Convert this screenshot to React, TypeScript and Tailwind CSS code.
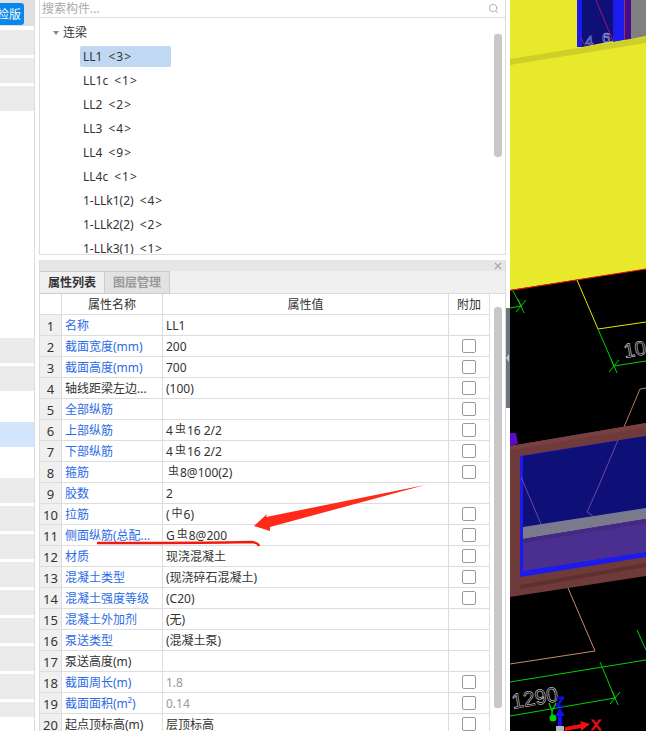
import { Search } from "lucide-react";

const font = { fontFamily: '"Noto Sans", "Noto Sans CJK SC", sans-serif' };

const sideRows = [
  { h: "h-[25px]", bg: "bg-[#ebebeb]", mt: "mt-[4px]" },
  { h: "h-[25px]", bg: "bg-[#ebebeb]", mt: "mt-[3px]" },
  { h: "h-[25px]", bg: "bg-[#ebebeb]", mt: "mt-[3px]" },
  { h: "h-[25px]", bg: "bg-[#ebebeb]", mt: "mt-[227px]" },
  { h: "h-[25px]", bg: "bg-[#ebebeb]", mt: "mt-[3px]" },
  { h: "h-[25px]", bg: "bg-[#d3e5fb]", mt: "mt-[31px]" },
  { h: "h-[25px]", bg: "bg-[#ebebeb]", mt: "mt-[31px]" },
  { h: "h-[25px]", bg: "bg-[#ebebeb]", mt: "mt-[3px]" },
  { h: "h-[25px]", bg: "bg-[#ebebeb]", mt: "mt-[3px]" },
  { h: "h-[25px]", bg: "bg-[#ebebeb]", mt: "mt-[3px]" },
  { h: "h-[25px]", bg: "bg-[#ebebeb]", mt: "mt-[3px]" },
  { h: "h-[25px]", bg: "bg-[#ebebeb]", mt: "mt-[3px]" },
  { h: "h-[25px]", bg: "bg-[#ebebeb]", mt: "mt-[3px]" },
  { h: "h-[25px]", bg: "bg-[#ebebeb]", mt: "mt-[3px]" },
  { h: "h-[15px]", bg: "bg-[#ebebeb]", mt: "mt-[3px]" },
];

const members = [
  { name: "LL1", count: "<3>" },
  { name: "LL1c", count: "<1>" },
  { name: "LL2", count: "<2>" },
  { name: "LL3", count: "<4>" },
  { name: "LL4", count: "<9>" },
  { name: "LL4c", count: "<1>" },
  { name: "1-LLk1(2)", count: "<4>" },
  { name: "1-LLk2(2)", count: "<2>" },
  { name: "1-LLk3(1)", count: "<1>" },
];

function Bar({ glyph = "虫" }: { glyph?: string }) {
  return <span className="relative top-[-2px] ml-[2px] mr-[1px] text-[11px] leading-none">{glyph}</span>;
}

type Row = {
  name: string;
  value?: React.ReactNode;
  blue?: boolean;
  check?: boolean;
  muted?: boolean;
};

const rows: Row[] = [
  { name: "名称", value: "LL1", blue: true },
  { name: "截面宽度(mm)", value: "200", blue: true, check: true },
  { name: "截面高度(mm)", value: "700", blue: true, check: true },
  { name: "轴线距梁左边...", value: "(100)", check: true },
  { name: "全部纵筋", blue: true, check: true },
  { name: "上部纵筋", value: <>4<Bar />16 2/2</>, blue: true, check: true },
  { name: "下部纵筋", value: <>4<Bar />16 2/2</>, blue: true, check: true },
  { name: "箍筋", value: <><Bar />8@100(2)</>, blue: true, check: true },
  { name: "胶数", value: "2", blue: true },
  { name: "拉筋", value: <>(<Bar glyph="中" />6)</>, blue: true, check: true },
  { name: "侧面纵筋(总配...", value: <>G<Bar />8@200</>, blue: true, check: true },
  { name: "材质", value: "现浇混凝土", blue: true, check: true },
  { name: "混凝土类型", value: "(现浇碎石混凝土)", blue: true, check: true },
  { name: "混凝土强度等级", value: "(C20)", blue: true, check: true },
  { name: "混凝土外加剂", value: "(无)", blue: true },
  { name: "泵送类型", value: "(混凝土泵)", blue: true },
  { name: "泵送高度(m)" },
  { name: "截面周长(m)", value: "1.8", blue: true, check: true, muted: true },
  { name: "截面面积(m²)", value: "0.14", blue: true, check: true, muted: true },
  { name: "起点顶标高(m)", value: "层顶标高", check: true },
];

function Tick({ x, y }: { x: number; y: number }) {
  return <path d={`M${x - 5} ${y + 6}L${x + 5} ${y - 6}M${x - 3} ${y - 7}L${x + 3} ${y + 7}`} stroke="#00d000" strokeWidth="1" fill="none" />;
}

// 3D model view on the right, coordinates are offset from x=510
function ModelView() {
  return (
    <svg width="136" height="731" viewBox="510 0 136 731" className="block" style={{ fontFamily: '"Liberation Sans", sans-serif' }}>
      <rect x="510" y="0" width="136" height="731" fill="#000" />
      <polygon points="510,0 646,0 646,269 510,290" fill="#e9e92b" />
      <polygon points="577,0 582,0 582,47 577,47" fill="#1b1bee" />
      <polygon points="582,0 613,0 613,41 582,47" fill="#0f0f78" />
      <polygon points="613,0 624,0 624,40 613,42" fill="#1b1bee" />
      <polygon points="624,0 631,0 631,39 624,40" fill="#4a0a90" />
      <rect x="624" y="0" width="1" height="40" fill="#8a4040" />
      <polygon points="631,0 646,0 646,36 631,39" fill="#808080" />
      <path d="M596 0L613 41M581 38L585 46" stroke="#a01870" strokeWidth="1" fill="none" />
      <text x="585" y="46" fontSize="15" fill="none" stroke="#a9a9e8" strokeWidth="0.5">4</text>
      <text x="602" y="43" fontSize="15" fill="none" stroke="#c4c4f0" strokeWidth="0.5">6</text>
      <polygon points="510,59 646,37 646,43 510,65" fill="#cfcf2a" />
      <line x1="510" y1="290.5" x2="646" y2="269" stroke="#f01010" strokeWidth="1.2" />

      <path d="M577 280L598 329L646 322" stroke="#e6e600" strokeWidth="1" fill="none" />
      <path d="M598 329L614 366L646 361" stroke="#00d000" strokeWidth="1" fill="none" />
      <path d="M513 291L521 306L510 308" stroke="#00d000" strokeWidth="1" fill="none" />
      <Tick x={521} y={306} />
      <Tick x={614} y={366} />
      <text x="625" y="358" fontSize="20" transform="rotate(-10 625 358)" fill="none" stroke="#f0f0f0" strokeWidth="0.5">10</text>

      <polygon points="510,433 516,433 518,444 510,446" fill="#5a0ac8" />
      <path d="M624 427L640 389L646 388" stroke="#b87860" strokeWidth="1" fill="none" />
      <polygon points="510,446 646,423 646,576 510,597" fill="#6f3a3a" />
      <polygon points="510,446 646,423 646,427 510,450" fill="#7a4040" />
      <polygon points="520,585 646,563 646,567 520,589" fill="#5f3030" />
      <polygon points="520,456 646,436 646,557 520,577" fill="#1b1bee" />
      <polygon points="523,456 646,436 646,508 523,527" fill="#0f0f78" />
      <polygon points="523,527 646,508 646,519 523,539" fill="#7a7a8c" />
      <polygon points="523,539 646,519 646,552 523,571" fill="#4a2e90" />
      <polygon points="523,539 646,519 646,523 523,543" fill="#432a80" />
      <path d="M618 440L597 490L587 512L593 516M521 477L541 524" stroke="#6a4aa0" strokeWidth="1" fill="none" />

      <path d="M568 588L595 651L510 664" stroke="#c88870" strokeWidth="1" fill="none" />
      <path d="M510 682L646 660M600 662L615 698M510 716L615 698M637 630L646 650" stroke="#00d000" strokeWidth="1" fill="none" />
      <Tick x={615} y={698} />
      <text x="513" y="709" fontSize="21" transform="rotate(-10 513 709)" fill="none" stroke="#f0f0f0" strokeWidth="0.5">1290</text>

      <path d="M549 703L552 711M556 703L552 711L552 717" stroke="#00d000" strokeWidth="1.4" fill="none" />
      <circle cx="553" cy="718" r="3.5" fill="#00d000" />
      <text x="556" y="707" fontSize="14" fill="none" stroke="#1010f0" strokeWidth="1">Z</text>
      <polygon points="560,708 565,716 562,716 562,727 558,727 558,716 555,716" fill="#1010f0" />
      <rect x="556" y="726" width="8" height="5" fill="#b8b8b8" />
      <polygon points="565,727 581,724 580,721 590,724 581,731 581,728 565,731" fill="#f01010" />
      <text x="591" y="730" fontSize="15" fill="none" stroke="#f01010" strokeWidth="1">X</text>
    </svg>
  );
}

export default function App() {
  return (
    <div className="relative flex h-[731px] w-[646px] overflow-hidden bg-white text-[12px] text-[#333]" style={font}>
      {/* left list, clipped by the screenshot */}
      <div className="w-[35px] shrink-0 border-r border-[#ddd]">
        <div className="flex h-[26px] items-center bg-[#e0e0e0]">
          <div className="mt-[2px] flex h-[22px] w-[24px] items-center justify-end overflow-hidden whitespace-nowrap rounded-r-[3px] bg-[#0b86ea] pr-[3px] pt-[1px] text-[#fff]">
            检版
          </div>
        </div>
        {sideRows.map((r, i) => (
          <div key={i} className={`${r.h} ${r.bg} ${r.mt}`} />
        ))}
      </div>

      {/* middle panels */}
      <div className="ml-[4px] flex w-[467px] shrink-0 flex-col">
        <div className="h-[255px] border-x border-b border-[#ddd]">
          <div className="flex h-[18px] items-center justify-between border-b border-[#ddd] pl-[2px] pr-[6px] text-[#aaa]">
            <span>搜索构件...</span>
            <Search size={11} strokeWidth={2} className="text-[#aaa]" />
          </div>
          <div className="relative h-[236px] overflow-hidden">
            <div className="flex h-[28px] items-center pl-[13px] pt-[2px]">
              <span className="mr-[4px] h-0 w-0 border-x-[3.5px] border-t-[4px] border-x-transparent border-t-[#888]" />
              <span>连梁</span>
            </div>
            <div className="flex flex-col">
              {members.map((m, i) => (
                <div key={m.name} className="flex h-[24px] items-start pl-[40px]">
                  <span className={`flex h-[21px] items-center whitespace-nowrap rounded-[2px] pl-[3px] pt-[1px] ${i === 0 ? "w-[91px] bg-[#c0d8f1]" : ""}`}>
                    {m.name}
                    <span className="ml-[6px] tracking-[1px]">{m.count}</span>
                  </span>
                </div>
              ))}
            </div>
            <div className="absolute left-[454px] top-[16px] h-[123px] w-[8px] rounded-[3px] bg-[#c8c8c8]" />
          </div>
        </div>

        <div className="mt-[5px] flex min-h-0 flex-1 flex-col border-x border-[#ddd]">
          <div className="flex h-[11px] items-center justify-end bg-[#e6e6e6] pr-[3px] text-[#aaa]">
            <svg width="8" height="8" viewBox="0 0 8 8">
              <path d="M1 1L7 7M7 1L1 7" stroke="#a8a8a8" strokeWidth="1.2" />
            </svg>
          </div>
          <div className="flex h-[23px] bg-[#f0f0f0]">
            <div className="flex w-[65px] items-center justify-center border-r border-t border-b border-[#ccc] pt-[1px] font-bold">属性列表</div>
            <div className="flex w-[65px] items-center justify-center border-r border-t border-b border-[#ccc] bg-[#e2e2e2] pt-[1px] font-bold text-[#999]">图层管理</div>
            <div className="flex-1 border-b border-[#ddd]" />
          </div>
          <div className="relative flex min-h-0 flex-1 overflow-hidden">
            <div className="w-[450px] shrink-0">
              <div className="flex h-[21px] border-b border-r border-[#ddd] text-center">
                <div className="w-[22px] shrink-0 border-r border-[#ddd]" />
                <div className="w-[101px] shrink-0 border-r border-[#ddd] leading-[22px]">属性名称</div>
                <div className="w-[286px] shrink-0 border-r border-[#ddd] leading-[22px]">属性值</div>
                <div className="flex-1 leading-[22px]">附加</div>
              </div>
              {rows.map((r, i) => (
                <div key={r.name} className="flex h-[21px] border-b border-r border-[#ddd] leading-[22px]">
                  <div className="w-[22px] shrink-0 border-r border-[#ddd] bg-[#f0f0f0] text-center text-[13px]">{i + 1}</div>
                  <div className={`w-[101px] shrink-0 overflow-hidden whitespace-nowrap border-r border-[#ddd] pl-[3px] ${r.blue ? "text-[#2b6be6]" : ""}`}>{r.name}</div>
                  <div className={`w-[286px] shrink-0 whitespace-nowrap border-r border-[#ddd] pl-[3px] ${r.muted ? "text-[#999]" : ""}`}>{r.value}</div>
                  <div className="flex flex-1 items-center justify-center">
                    {r.check && <span className="h-[14px] w-[14px] rounded-[2px] border border-[#999]" />}
                  </div>
                </div>
              ))}
            </div>
            <div className="absolute left-[454px] top-[13px] h-[401px] w-[8px] rounded-[3px] bg-[#c8c8c8]" />
          </div>
        </div>
      </div>

      {/* collapse handle between panel and model view */}
      <div className="relative w-[4px] shrink-0">
        <div className="absolute left-0 top-[308px] flex h-[100px] w-[4px] items-center bg-[#6c7680]">
          <span className="h-0 w-0 border-y-[4px] border-r-[3px] border-y-transparent border-r-[#ccc]" />
        </div>
      </div>

      <ModelView />

      {/* red markup on top of the table */}
      <svg className="pointer-events-none absolute left-0 top-0" width="646" height="731" viewBox="0 0 646 731">
        <polygon points="425,485 266,517 267,514 254,526 270,531 270,527" fill="#ff2a1a" />
        <path d="M97 543C150 543 210 543 250 542C255 542 258 543 259 546" stroke="#f01a10" strokeWidth="2.4" fill="none" />
      </svg>
    </div>
  );
}
